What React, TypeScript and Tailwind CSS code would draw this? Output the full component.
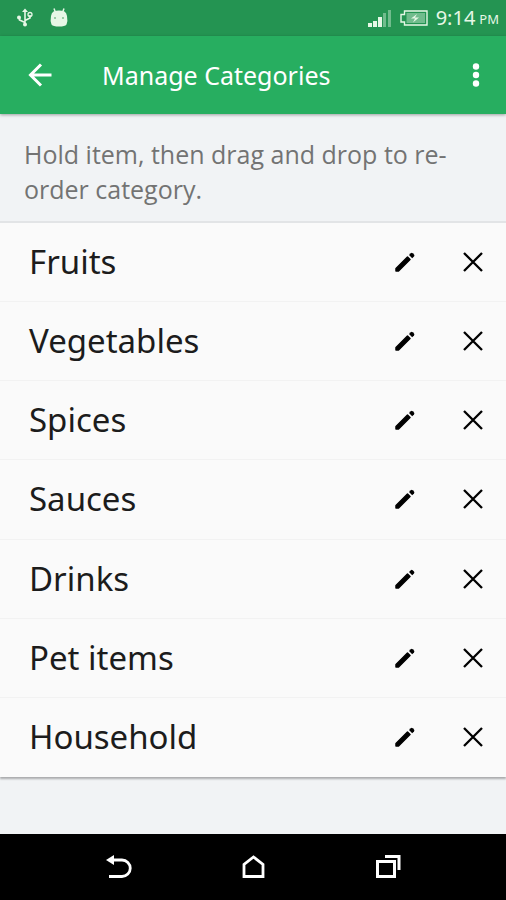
import {useState} from "react";

const initialCategories = ["Fruits", "Vegetables", "Spices", "Sauces", "Drinks", "Pet items", "Household"];

function StatusBar() {
    return (
        <div className="flex h-9 items-center justify-between bg-[#249452] pl-4 pr-[7px] text-[#e6f7e6]">
            <div className="flex items-center gap-4">
                <svg width="18" height="20" viewBox="0 0 18 20" fill="none" stroke="currentColor" strokeWidth="1.6">
                    <path d="M9 3v13M9 14.500L3.500 12V9.500M9 12.500l5-2.500V7"/>
                    <path d="M6 4L9 0.500L12 4z" fill="currentColor" stroke="none"/>
                    <circle cx="9" cy="16.500" r="2" fill="currentColor" stroke="none"/>
                    <circle cx="3" cy="9.500" r="2" fill="currentColor" stroke="none"/>
                    <circle cx="14" cy="6.500" r="2" strokeWidth="1.300"/>
                </svg>
                <svg width="18" height="20" viewBox="0 0 18 20">
                    <path d="M4 0.500l1.500 4M14 0.500l-1.500 4" stroke="currentColor" strokeWidth="1.500"/>
                    <path
                        d="M3.500 3.500Q9 1.500 14.500 3.500Q16.500 4.500 17 8Q18 13 16.500 16.500Q15 18.500 9 18.500T1.500 16.500Q0 13 1 8Q1.500 4.500 3.500 3.500z"
                        fill="currentColor"
                    />
                    <path d="M4 10h2M12 10h2" stroke="#7fbf90" strokeWidth="1.600"/>
                </svg>
            </div>
            <div className="flex items-center">
                <svg width="24" height="18" viewBox="0 0 24 18" fill="currentColor">
                    <path d="M0 14h4v4H0zM5 12h4v6H5zM10 8h4v10h-4z"/>
                    <path d="M15 4h3v14h-3zM20 1h3v17h-3z" opacity="0.4"/>
                </svg>
                <svg className="ml-2" width="28" height="16" viewBox="0 0 28 16" fill="none" stroke="currentColor">
                    <path d="M4.500 1H27v14H4.500v-3H1V4.500h3.500z" strokeWidth="1.400"/>
                    <path d="M6.500 3H25v10H6.500z" fill="currentColor" stroke="none" opacity="0.4"/>
                    <path d="M17 4L11 8.500h4L13 12.500L19 7.500h-4z" fill="currentColor" stroke="none"/>
                </svg>
                <span className="ml-2 text-[20px] leading-9">9:14</span>
                <span className="ml-1 mt-1 text-[13px]">PM</span>
            </div>
        </div>
    );
}

function AppBar() {
    return (
        <header className="relative flex h-[78px] items-center bg-[#27ae60] pl-7 pr-4 text-white shadow-[0_1px_3px_rgba(0,0,0,0.35)]">
            <button type="button" aria-label="Back">
                <svg width="24" height="24" viewBox="0 0 24 24" fill="none" stroke="currentColor" strokeWidth="3">
                    <path d="M23.500 12H3M13 1.500L2.500 12L13 22.500"/>
                </svg>
            </button>
            <h1 className="ml-[50px] flex-1 pt-0.5 text-[25px]">Manage Categories</h1>
            <button type="button" aria-label="More options">
                <svg width="28" height="28" viewBox="0 0 28 28" fill="currentColor">
                    <circle cx="14" cy="5.500" r="3.200"/>
                    <circle cx="14" cy="14" r="3.200"/>
                    <circle cx="14" cy="22.500" r="3.200"/>
                </svg>
            </button>
        </header>
    );
}

function CategoryRow(props: { name: string, onRemove: () => void }) {
    return (
        <li className="flex items-center border-b border-[#f2f2f2] pl-[29px] pr-5 last:border-b-0">
            <span className="flex-1 text-[33px] leading-[48px] text-[#1c1c1c]">{props.name}</span>
            <button type="button" aria-label={`Edit ${props.name}`} className="text-black">
                <svg width="24" height="24" viewBox="0 0 24 24" fill="currentColor">
                    <path d="M4 18.500L15.500 7L18 9.500L6.500 21H4z" stroke="currentColor" strokeWidth="1.500" strokeLinejoin="round"/>
                    <path d="M17 5L18.800 3.200Q19.700 2.300 20.700 3.200L22 4.500Q22.800 5.500 22 6.400L20.200 8.200z"/>
                </svg>
            </button>
            <button type="button" aria-label={`Delete ${props.name}`} className="ml-11 text-black" onClick={props.onRemove}>
                <svg width="26" height="26" viewBox="0 0 26 26" fill="none" stroke="currentColor" strokeWidth="2.300">
                    <path d="M4 4l18 18M22 4L4 22"/>
                </svg>
            </button>
        </li>
    );
}

function NavBar() {
    return (
        <nav className="flex h-[66px] items-center justify-center gap-[107px] bg-black text-white">
            <button type="button" aria-label="Back">
                <svg width="28" height="28" viewBox="0 0 28 28" fill="none" stroke="currentColor" strokeWidth="2.800">
                    <path d="M9 7h9a8 8 0 0 1 0 16.500H5"/>
                    <path d="M2 7l8-5v10z" fill="currentColor" stroke="none"/>
                </svg>
            </button>
            <button type="button" aria-label="Home">
                <svg width="28" height="28" viewBox="0 0 28 28" fill="none" stroke="currentColor" strokeWidth="2.800">
                    <path d="M5 23.500V11.500L14.500 4L24 11.500V23.500z"/>
                </svg>
            </button>
            <button type="button" aria-label="Recent apps">
                <svg width="28" height="28" viewBox="0 0 28 28" fill="none" stroke="currentColor" strokeWidth="3">
                    <path d="M3.500 8.500h17v15h-17z"/>
                    <path d="M11 3.500h14V17"/>
                </svg>
            </button>
        </nav>
    );
}

function App() {
    const [categories, setCategories] = useState(initialCategories);

    const onRemove = (name: string) => {
        setCategories(categories.filter((c) => c !== name));
    }

    return (
        <div className="flex min-h-screen flex-col bg-[#f1f3f5] font-['Noto_Sans','Open_Sans',sans-serif]">
            <StatusBar/>
            <AppBar/>
            <main className="flex flex-1 flex-col">
                <p className="px-6 pb-[14px] pt-[23px] font-['Open_Sans',sans-serif] text-[25px] leading-[35px] text-[#737373]">
                    Hold item, then drag and drop to re-order category.
                </p>
                <ul className="mb-[57px] grid flex-1 auto-rows-fr border-t-2 border-[#e2e4e6] bg-[#fafafa] shadow-[0_2px_2px_rgba(0,0,0,0.3)]">
                    {categories.map((name) => (
                        <CategoryRow key={name} name={name} onRemove={() => onRemove(name)}/>
                    ))}
                </ul>
            </main>
            <NavBar/>
        </div>
    );
}

export default App;
